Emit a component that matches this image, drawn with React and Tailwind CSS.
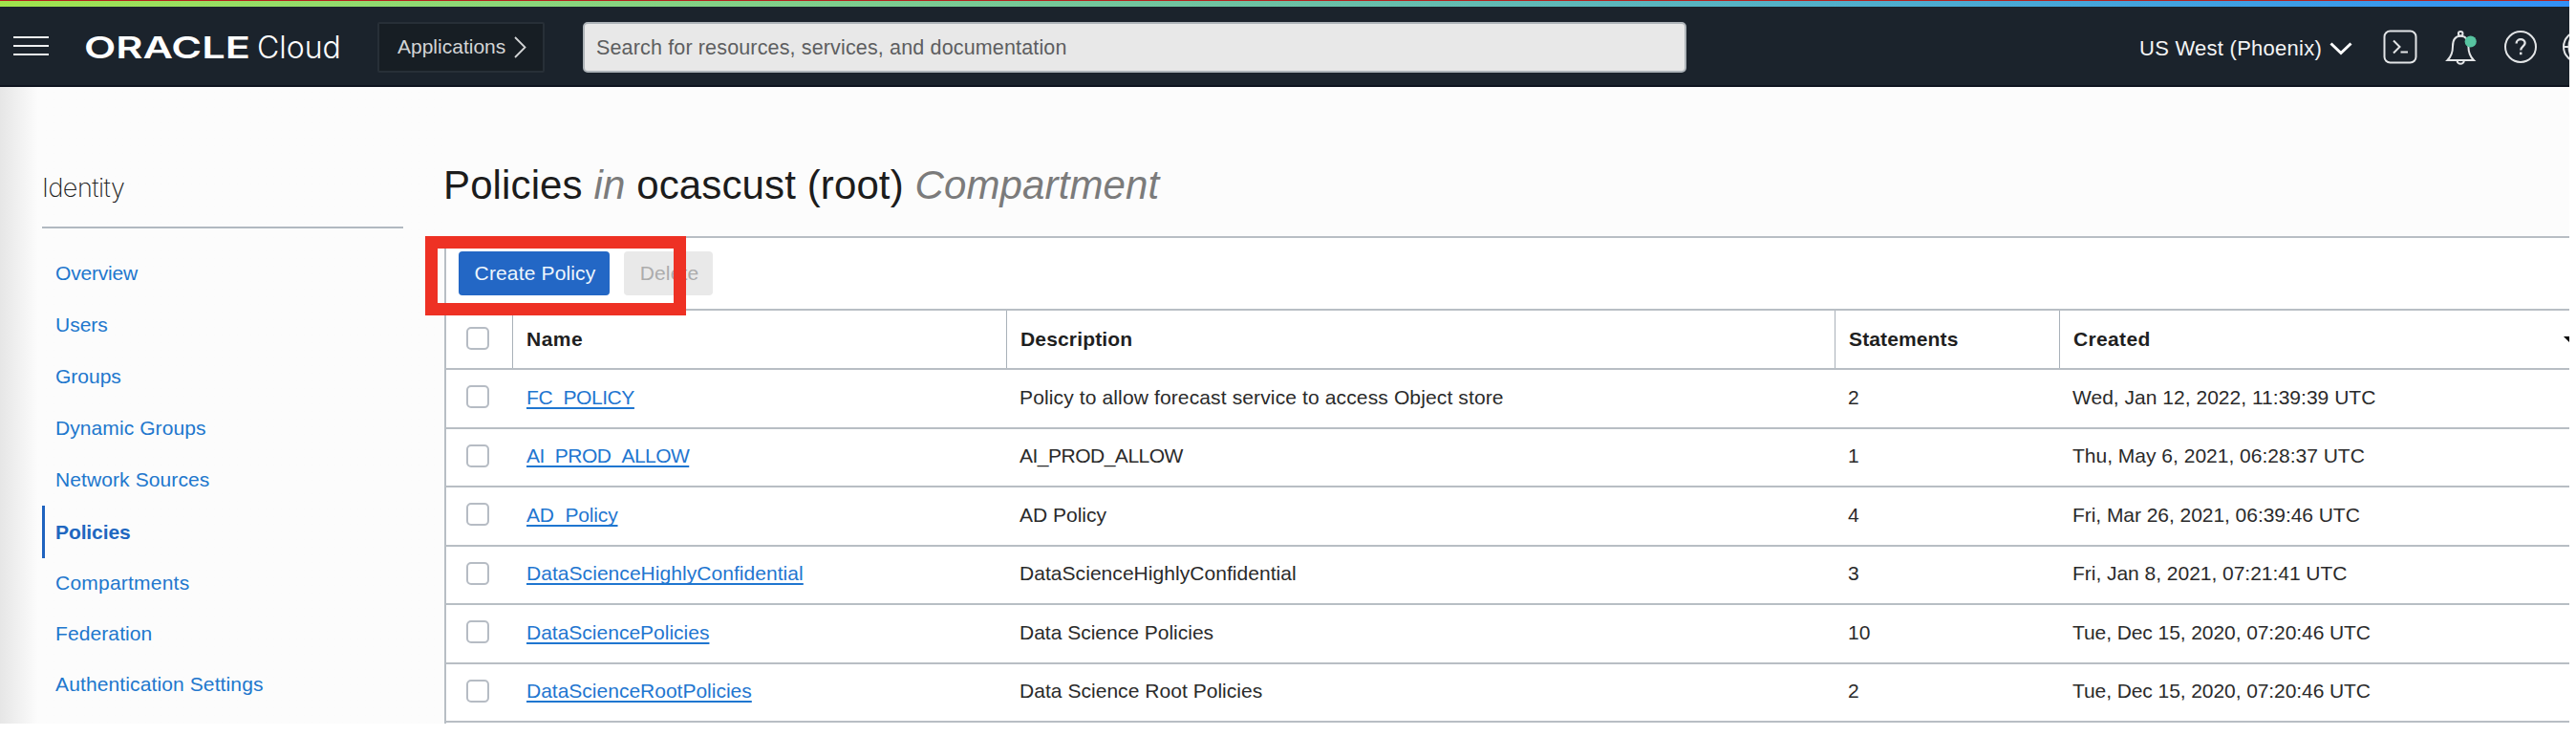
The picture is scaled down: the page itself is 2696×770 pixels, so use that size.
import React from "react";

const NAV = [
  { label: "Overview", cls: "h-[55px] tracking-[-0.2px]" },
  { label: "Users", cls: "h-[54px]" },
  { label: "Groups", cls: "h-[54px]" },
  { label: "Dynamic Groups", cls: "h-[54px] tracking-[0.08px]" },
  { label: "Network Sources", cls: "h-[54px] tracking-[0.1px]" },
  { label: "Policies", cls: "h-[55px] tracking-[-0.1px]", active: true },
  { label: "Compartments", cls: "h-[52px] tracking-[0.22px]" },
  { label: "Federation", cls: "h-[53px] tracking-[0.1px]" },
  { label: "Authentication Settings", cls: "h-[54px] tracking-[0.12px]" },
];

const ROWS = [
  { name: "FC_POLICY", nameCls: "tracking-[-0.42px]", desc: "Policy to allow forecast service to access Object store", descCls: "tracking-[0.13px]", count: "2", created: "Wed, Jan 12, 2022, 11:39:39 UTC", createdCls: "tracking-[0.02px]" },
  { name: "AI_PROD_ALLOW", nameCls: "tracking-[-0.55px]", desc: "AI_PROD_ALLOW", descCls: "tracking-[-0.5px]", count: "1", created: "Thu, May 6, 2021, 06:28:37 UTC", createdCls: "" },
  { name: "AD_Policy", nameCls: "tracking-[-0.15px]", desc: "AD Policy", descCls: "", count: "4", created: "Fri, Mar 26, 2021, 06:39:46 UTC", createdCls: "tracking-[-0.05px]" },
  { name: "DataScienceHighlyConfidential", nameCls: "tracking-[0.05px]", desc: "DataScienceHighlyConfidential", descCls: "tracking-[0.05px]", count: "3", created: "Fri, Jan 8, 2021, 07:21:41 UTC", createdCls: "tracking-[-0.03px]" },
  { name: "DataSciencePolicies", nameCls: "", desc: "Data Science Policies", descCls: "", count: "10", created: "Tue, Dec 15, 2020, 07:20:46 UTC", createdCls: "tracking-[-0.08px]" },
  { name: "DataScienceRootPolicies", nameCls: "", desc: "Data Science Root Policies", descCls: "tracking-[0.04px]", count: "2", created: "Tue, Dec 15, 2020, 07:20:46 UTC", createdCls: "tracking-[-0.08px]" },
];

const COLS = "grid grid-cols-[70px_517px_867px_235px_1fr]";

function Checkbox() {
  return <span className="block h-6 w-6 rounded-[5px] border-2 border-[#b6bcc4] bg-white" />;
}

function Header() {
  return (
    <header className="flex h-[84px] shrink-0 items-center border-b-2 border-[#0f141f] bg-[#1b232c] pt-[2px] whitespace-nowrap [&>*]:shrink-0">
      <div className="mt-[-2px] ml-[14px] flex w-[37px] flex-col gap-[7px]">
        <span className="h-[2px] bg-[#eef0f1]" />
        <span className="h-[2px] bg-[#eef0f1]" />
        <span className="h-[2px] bg-[#eef0f1]" />
      </div>
      <svg className="ml-[35px] h-[40px] w-[276px]" viewBox="0 0 276 40" fill="#fff">
        <text x="2" y="32" fontFamily="Inter, sans-serif" fontWeight="600" fontSize="31.5" textLength="174" lengthAdjust="spacingAndGlyphs">
          ORACLE
        </text>
        <text x="183" y="32" fontFamily="Inter, sans-serif" fontWeight="300" fontSize="32">
          Cloud
        </text>
      </svg>
      <button className="ml-[33px] flex h-[53px] w-[175px] items-center rounded-[2px] border-2 border-[#272f37] bg-[#171e24] pl-[19px] text-[21px] text-[#d3d5d6]">
        Applications
        <svg className="ml-[9px] h-[23px] w-[13px]" viewBox="0 0 13 23" fill="none" stroke="#d3d5d6" strokeWidth="1.8">
          <path d="M1 1 L11.5 11.5 L1 22" />
        </svg>
      </button>
      <div className="ml-[40px] flex h-[53px] w-[1155px] items-center rounded-[5px] border-2 border-[#aeb4b9] bg-[#e8e8e8] pt-[3px] pl-[12px] text-[21.5px] tracking-[0.15px] text-[#5d5e60]">
        Search for resources, services, and documentation
      </div>
      <div className="ml-[474px] flex w-[193px] items-center pt-[2px] text-[22px] tracking-[0.26px] text-[#f3f4f5]">US West (Phoenix)</div>
      <svg className="mt-[4px] ml-[6px] h-[14px] w-[24px]" viewBox="0 0 24 14" fill="none" stroke="#fff" strokeWidth="3">
        <path d="M1.5 1.5 L12 11.5 L22.5 1.5" />
      </svg>
      <svg className="ml-[32px] h-[36px] w-[36px]" viewBox="0 0 36 36" fill="none" stroke="#e3e5e7" strokeWidth="2">
        <rect x="1.5" y="1.5" width="33" height="33" rx="6" />
        <path d="M11 11.5 L17.5 18 L11 24.5 M18.5 23.5 H26" />
      </svg>
      <svg className="ml-[28px] h-[37px] w-[34px]" viewBox="0 0 34 37" fill="none" stroke="#e3e5e7" strokeWidth="2">
        <circle cx="17.2" cy="4.2" r="2.3" />
        <path d="M3.5 32 C7.5 28 9 23 9 17.5 C9 10.5 11.5 6.8 17.2 6.8 C22.9 6.8 25.4 10.5 25.4 17.5 C25.4 23 27 28 31 32 Z" />
        <path d="M13.6 32.5 a3.6 3.3 0 0 0 7.2 0" />
        <circle cx="27.7" cy="12.5" r="6.1" fill="#57c3a0" stroke="none" />
      </svg>
      <svg className="ml-[27px] h-[36px] w-[36px]" viewBox="0 0 36 36" fill="none" stroke="#e3e5e7" strokeWidth="2">
        <circle cx="19" cy="18" r="16" />
        <path d="M14.6 14.6 C14.6 8.8 23.6 8.9 23.6 14.1 C23.6 17.4 19.2 17.4 19.2 21.6" strokeWidth="2.3" />
        <path d="M19.2 23.6 V26.2" strokeWidth="2.5" />
      </svg>
      <svg className="ml-[26px] h-[36px] w-[36px]" viewBox="0 0 36 36" fill="none" stroke="#e3e5e7" strokeWidth="2">
        <circle cx="18" cy="18" r="16" />
        <ellipse cx="18" cy="18" rx="10.5" ry="16" />
        <path d="M2 18 H34" />
      </svg>
    </header>
  );
}

function Sidebar() {
  return (
    <aside className="w-[465px] shrink-0 bg-linear-to-r from-[#e6e6e6] to-[#fcfcfc] to-[40px] pl-[44px]">
      <h2 className="h-[148px] w-[378px] border-b-2 border-[#b1b9c1] pt-[88px] font-['Inter'] text-[27px] leading-[36px] font-extralight tracking-[-0.5px] text-[#222]">
        Identity
      </h2>
      <nav className="mt-[19px] flex flex-col text-[21px] text-[#2177cd]">
        {NAV.map((n) => (
          <a
            key={n.label}
            className={`${n.cls} flex items-center border-l-[3px] pl-[11px] ${n.active ? "border-[#1f63bf] font-bold text-[#2067c0]" : "border-transparent"}`}
          >
            {n.label}
          </a>
        ))}
      </nav>
    </aside>
  );
}

function PolicyTable() {
  return (
    <section className="relative h-[600px] border-t-2 border-l-2 border-[#b8bec4] bg-white text-[21px] text-[#2a2a2a]">
      <div className="flex h-[76px] items-start gap-[15px] border-b-2 border-[#b8bec4] pt-[14px] pl-[13px] tracking-[0.15px]">
        <button className="h-[46px] w-[158px] rounded-[4px] bg-[#2367c5] pl-[2px] text-[#eef6fd]">Create Policy</button>
        <button className="h-[46px] w-[93px] rounded-[4px] bg-[#e9e9e9] pl-[2px] text-[#acacac]">Delete</button>
      </div>
      <div className={`${COLS} h-[62px] border-b-2 border-[#b8bec4] font-bold text-[#1f1f1f]`}>
        <div className="flex items-center border-r border-[#a9b1b9] pb-[3px] pl-[21px]"><Checkbox /></div>
        <div className="flex items-center border-r border-[#a9b1b9] pl-[14px] tracking-[0.5px]">Name</div>
        <div className="flex items-center border-r border-[#a9b1b9] pl-[14px] tracking-[0.16px]">Description</div>
        <div className="flex items-center border-r border-[#a9b1b9] pl-[14px] tracking-[0.13px]">Statements</div>
        <div className="flex items-center justify-between pl-[14px] tracking-[0.35px]">
          Created
          <svg className="-mr-[6px] h-[6px] w-[12px]" viewBox="0 0 12 6" fill="#000"><path d="M0 0 H12 L6 6 Z" /></svg>
        </div>
      </div>
      {ROWS.map((r) => (
        <div key={r.name} className={`${COLS} h-[61.5px] items-center border-b-2 border-[#b8bec4] pb-[3px]`}>
          <div className="pl-[21px]"><Checkbox /></div>
          <div className={`${r.nameCls} pl-[14px] text-[#1f76d0]`}>
            <a className="underline decoration-[1.5px] underline-offset-[3px] [text-decoration-skip-ink:none]">{r.name}</a>
          </div>
          <div className={`${r.descCls} pl-[13px]`}>{r.desc}</div>
          <div className="pl-[13px]">{r.count}</div>
          <div className={`${r.createdCls} pl-[13px]`}>{r.created}</div>
        </div>
      ))}
      <div className="absolute top-[-2px] left-[-22px] h-[83px] w-[273px] border-[13px] border-[#ee3124]" />
    </section>
  );
}

export default function App() {
  return (
    <div className="h-[770px] w-[2696px] overflow-hidden bg-white">
      <div className="flex h-[757px] w-[2689px] flex-col overflow-hidden bg-[#fcfcfc] font-['Liberation_Sans',Arial,sans-serif]">
        <div className="h-px shrink-0 bg-[#b5231f]" />
        <div className="h-[6px] shrink-0 bg-linear-to-r from-[#a0e44c] via-[#6cc1a4] to-[#3390f5]" />
        <Header />
        <div className="flex min-h-0 flex-1">
          <Sidebar />
          <main className="min-w-0 flex-1">
            <h1 className="ml-[-1px] h-[156px] pt-[79px] text-[42px] leading-[48px] tracking-[0.12px] text-[#1c1c1c]">
              Policies <em className="text-[#7b7b7b]">in</em> ocascust (root) <em className="text-[#7b7b7b]">Compartment</em>
            </h1>
            <PolicyTable />
          </main>
        </div>
      </div>
    </div>
  );
}
